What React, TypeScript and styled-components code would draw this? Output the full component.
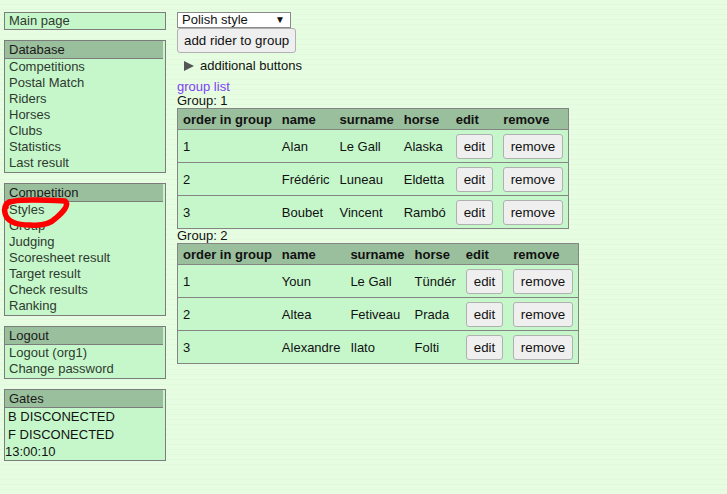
import React from "react";
import styled, { createGlobalStyle } from "styled-components";

const Global = createGlobalStyle`
  html, body { margin: 0; padding: 0; }
  body {
    background-color: #e4fce0;
    background-image: repeating-linear-gradient(to bottom, #e6fde2 0px, #e6fde2 4px, #e1f9dd 4px, #e1f9dd 5px);
    font-family: "Liberation Sans", Arial, sans-serif;
    font-size: 13px;
    color: #111;
    min-height: 494px;
  }
`;

const Page = styled.div`
  display: flex;
  align-items: flex-start;
  gap: 11px;
  padding: 12px 0 0 4px;
  position: relative;
`;

const Sidebar = styled.div`
  width: 162px;
  display: flex;
  flex-direction: column;
  gap: 10px;
`;

const Box = styled.div<{ $headed?: boolean }>`
  background: #c6f7cb;
  border: 1px solid #7c7c7c;
  box-sizing: border-box;
  width: 162px;
  padding-bottom: ${(p) => (p.$headed ? "1px" : "0")};
`;

const BoxHeader = styled.div`
  background: #9abf9c;
  height: 17px;
  line-height: 17px;
  margin-right: 2px;
  padding-left: 4px;
  border-bottom: 1px solid #7c7c7c;
  color: #1a1a1a;
`;

const MenuItem = styled.div`
  line-height: 16px;
  padding-left: 4px;
  color: #2f3a2f;
`;

const GateItem = styled.div<{ $tight?: boolean }>`
  line-height: ${(p) => (p.$tight ? "16px" : "18px")};
  padding-left: ${(p) => (p.$tight ? "0" : "3px")};
  color: #121212;
`;

const Main = styled.div`
  display: flex;
  flex-direction: column;
  align-items: flex-start;
`;

const Select = styled.div`
  width: 114px;
  height: 16px;
  box-sizing: border-box;
  background: #fff;
  border: 1px solid #8a8a8a;
  display: flex;
  align-items: center;
  justify-content: space-between;
  padding: 0 5px 0 4px;
  line-height: 14px;
  color: #111;
`;

const Arrow = styled.span`
  font-size: 10px;
  line-height: 10px;
  color: #111;
`;

const Button = styled.button<{ $px?: number }>`
  font-family: "Liberation Sans", Arial, sans-serif;
  font-size: 13.33px;
  line-height: 15px;
  height: 25px;
  padding: 4px ${(p) => p.$px ?? 6.5}px;
  background: #efefef;
  border: 1px solid #b0b0b0;
  border-radius: 3px;
  color: #111;
  box-sizing: border-box;
  margin: 0;
  display: inline-block;
  vertical-align: top;
`;

const Summary = styled.div`
  display: flex;
  align-items: center;
  gap: 6px;
  margin: 5px 0 5px 7px;
  line-height: 16px;
`;

const Tri = styled.span`
  width: 0;
  height: 0;
  border-top: 5.5px solid transparent;
  border-bottom: 5.5px solid transparent;
  border-left: 10px solid #555;
`;

const Link = styled.a`
  color: #7f3ff5;
  text-decoration: none;
  line-height: 15px;
`;

const GroupLabel = styled.div`
  line-height: 14px;
`;

const Table = styled.table`
  border-collapse: collapse;
  border: 1px solid #858585;
  background: #c6f7cb;
`;

const Th = styled.th`
  background: #9abf9c;
  text-align: left;
  font-weight: bold;
  padding: 3px 5px 2px;
  line-height: 15px;
  color: #111;
  white-space: nowrap;
`;

const Td = styled.td`
  padding: 4px 5px 3px;
  border-top: 1px solid #858585;
  line-height: 15px;
  white-space: nowrap;
  color: #111;
  vertical-align: middle;
`;

const Annotation = styled.svg`
  position: absolute;
  left: 0;
  top: 0;
  pointer-events: none;
`;

type Rider = [string, string, string, string];

const groups: { id: number; riders: Rider[] }[] = [
  {
    id: 1,
    riders: [
      ["1", "Alan", "Le Gall", "Alaska"],
      ["2", "Frédéric", "Luneau", "Eldetta"],
      ["3", "Boubet", "Vincent", "Rambó"],
    ],
  },
  {
    id: 2,
    riders: [
      ["1", "Youn", "Le Gall", "Tündér"],
      ["2", "Altea", "Fetiveau", "Prada"],
      ["3", "Alexandre", "Ilato", "Folti"],
    ],
  },
];

export default function App() {
  return (
    <>
      <Global />
      <Page>
        <Sidebar>
          <Box>
            <MenuItem>Main page</MenuItem>
          </Box>
          <Box $headed>
            <BoxHeader>Database</BoxHeader>
            {["Competitions", "Postal Match", "Riders", "Horses", "Clubs", "Statistics", "Last result"].map((t) => (
              <MenuItem key={t}>{t}</MenuItem>
            ))}
          </Box>
          <Box $headed>
            <BoxHeader>Competition</BoxHeader>
            {["Styles", "Group", "Judging", "Scoresheet result", "Target result", "Check results", "Ranking"].map((t) => (
              <MenuItem key={t}>{t}</MenuItem>
            ))}
          </Box>
          <Box $headed>
            <BoxHeader>Logout</BoxHeader>
            <MenuItem>Logout (org1)</MenuItem>
            <MenuItem>Change password</MenuItem>
          </Box>
          <Box>
            <BoxHeader>Gates</BoxHeader>
            <GateItem>B DISCONECTED</GateItem>
            <GateItem>F DISCONECTED</GateItem>
            <GateItem $tight>13:00:10</GateItem>
          </Box>
        </Sidebar>
        <Main>
          <Select>
            <span>Polish style</span>
            <Arrow>▼</Arrow>
          </Select>
          <Button $px={6}>add rider to group</Button>
          <Summary>
            <Tri />
            <span>additional buttons</span>
          </Summary>
          <Link href="#">group list</Link>
          {groups.map((g) => (
            <React.Fragment key={g.id}>
              <GroupLabel>Group: {g.id}</GroupLabel>
              <Table>
                <thead>
                  <tr>
                    <Th>order in group</Th>
                    <Th>name</Th>
                    <Th>surname</Th>
                    <Th>horse</Th>
                    <Th>edit</Th>
                    <Th>remove</Th>
                  </tr>
                </thead>
                <tbody>
                  {g.riders.map((r) => (
                    <tr key={r[0]}>
                      <Td>{r[0]}</Td>
                      <Td>{r[1]}</Td>
                      <Td>{r[2]}</Td>
                      <Td>{r[3]}</Td>
                      <Td>
                        <Button $px={7}>edit</Button>
                      </Td>
                      <Td>
                        <Button>remove</Button>
                      </Td>
                    </tr>
                  ))}
                </tbody>
              </Table>
            </React.Fragment>
          ))}
        </Main>
        <Annotation width="80" height="240" viewBox="0 0 80 240">
          <path
            d="M 6 207 C 3 199, 30 199, 65 201 C 70 205, 62 213, 56 218 C 50 224, 40 226, 30 225 C 18 225, 7 223, 5 213 C 4 209, 5 205, 9 202"
            fill="none"
            stroke="#ff0000"
            strokeWidth="5.5"
            strokeLinecap="round"
            strokeLinejoin="round"
          />
        </Annotation>
      </Page>
    </>
  );
}
